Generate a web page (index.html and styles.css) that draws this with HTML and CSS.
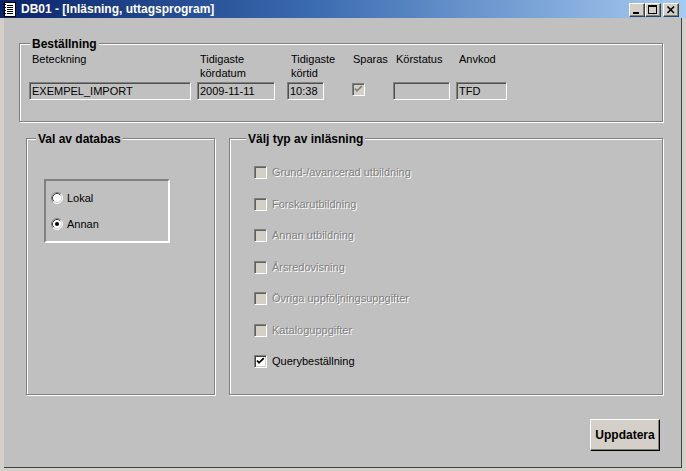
FILE: index.html
```html
<!DOCTYPE html>
<html lang="sv">
<head>
<meta charset="utf-8">
<title>DB01 - [Inläsning, uttagsprogram]</title>
<link rel="stylesheet" href="styles.css">
</head>
<body>
<div class="window">
  <div class="titlebar">
    <svg class="app-icon" width="13" height="15" viewBox="0 0 13 15">
      <rect x="1.5" y="0.5" width="11" height="14" fill="#fff" stroke="#000"/>
      <rect x="0" y="2" width="3" height="1" fill="#000"/>
      <rect x="0" y="5" width="3" height="1" fill="#000"/>
      <rect x="0" y="8" width="3" height="1" fill="#000"/>
      <rect x="0" y="11" width="3" height="1" fill="#000"/>
      <rect x="4" y="3" width="6" height="1" fill="#000"/>
      <rect x="4" y="5" width="6" height="1" fill="#000"/>
      <rect x="4" y="7" width="6" height="1" fill="#000"/>
      <rect x="4" y="9" width="6" height="1" fill="#000"/>
      <rect x="4" y="11" width="6" height="1" fill="#000"/>
    </svg>
    <span class="title">DB01 - [Inläsning, uttagsprogram]</span>
    <div class="caption-buttons">
      <span class="cap-btn">
        <svg width="14" height="12" viewBox="0 0 14 12"><rect x="3" y="8" width="6" height="2" fill="#000"/></svg>
      </span>
      <span class="cap-btn">
        <svg width="14" height="12" viewBox="0 0 14 12"><rect x="2" y="1" width="9" height="9" fill="#000"/><rect x="3" y="3" width="7" height="6" fill="#d4d0c8"/></svg>
      </span>
      <span class="cap-btn cap-btn-close">
        <svg width="14" height="12" viewBox="0 0 14 12"><path d="M3.5 2.5 L10 9 M10 2.5 L3.5 9" stroke="#000" stroke-width="1.6" fill="none"/></svg>
      </span>
    </div>
  </div>
  <div class="frame">
    <div class="client">
      <div class="group group-order">
        <span class="legend legend-order">Beställning</span>
        <div class="order-grid">
          <div class="col">
            <div class="lbl">Beteckning</div>
            <div class="field field-w162">EXEMPEL_IMPORT</div>
          </div>
          <div class="col">
            <div class="lbl">Tidigaste<br>kördatum</div>
            <div class="field field-w78">2009-11-11</div>
          </div>
          <div class="col">
            <div class="lbl lbl-wide">Tidigaste<br>körtid</div>
            <div class="field field-w37">10:38</div>
          </div>
          <div class="col">
            <div class="lbl lbl-narrow">Sparas</div>
            <div class="field-slot">
              <span class="chk chk-disabled">
                <svg width="11" height="11" viewBox="0 0 11 11"><path d="M2 4.5 L4 6.8 L8.8 2.2" stroke="#808080" stroke-width="1.7" fill="none"/></svg>
              </span>
            </div>
          </div>
          <div class="col">
            <div class="lbl">Körstatus</div>
            <div class="field field-w57"></div>
          </div>
          <div class="col">
            <div class="lbl">Anvkod</div>
            <div class="field field-w51">TFD</div>
          </div>
        </div>
      </div>

      <div class="row2">
        <div class="group group-db">
          <span class="legend legend-db">Val av databas</span>
          <div class="radio-box">
            <div class="radio-row">
              <svg class="radio" width="12" height="12" viewBox="0 0 12 12">
                <circle cx="6" cy="6" r="5" fill="#fff"/>
                <path d="M2.11 9.89 A5.5 5.5 0 0 1 9.89 2.11" stroke="#808080" fill="none"/>
                <path d="M9.89 2.11 A5.5 5.5 0 0 1 2.11 9.89" stroke="#fff" fill="none"/>
                <path d="M2.82 9.18 A4.5 4.5 0 0 1 9.18 2.82" stroke="#404040" fill="none"/>
                <path d="M9.18 2.82 A4.5 4.5 0 0 1 2.82 9.18" stroke="#d4d0c8" fill="none"/>
              </svg>
              <span>Lokal</span>
            </div>
            <div class="radio-row">
              <svg class="radio" width="12" height="12" viewBox="0 0 12 12">
                <circle cx="6" cy="6" r="5" fill="#fff"/>
                <path d="M2.11 9.89 A5.5 5.5 0 0 1 9.89 2.11" stroke="#808080" fill="none"/>
                <path d="M9.89 2.11 A5.5 5.5 0 0 1 2.11 9.89" stroke="#fff" fill="none"/>
                <path d="M2.82 9.18 A4.5 4.5 0 0 1 9.18 2.82" stroke="#404040" fill="none"/>
                <path d="M9.18 2.82 A4.5 4.5 0 0 1 2.82 9.18" stroke="#d4d0c8" fill="none"/>
                <circle cx="6" cy="6" r="2" fill="#000"/>
              </svg>
              <span>Annan</span>
            </div>
          </div>
        </div>

        <div class="group group-type">
          <span class="legend legend-type">Välj typ av inläsning</span>
          <div class="check-row"><span class="chk chk-disabled"></span><span class="disabled-text">Grund-/avancerad utbildning</span></div>
          <div class="check-row"><span class="chk chk-disabled"></span><span class="disabled-text">Forskarutbildning</span></div>
          <div class="check-row"><span class="chk chk-disabled"></span><span class="disabled-text">Annan utbildning</span></div>
          <div class="check-row"><span class="chk chk-disabled"></span><span class="disabled-text">Årsredovisning</span></div>
          <div class="check-row"><span class="chk chk-disabled"></span><span class="disabled-text">Övriga uppföljningsuppgifter</span></div>
          <div class="check-row"><span class="chk chk-disabled"></span><span class="disabled-text">Kataloguppgifter</span></div>
          <div class="check-row">
            <span class="chk">
              <svg width="11" height="11" viewBox="0 0 11 11"><path d="M2 4.5 L4 6.8 L8.8 2.2" stroke="#000" stroke-width="1.8" fill="none"/></svg>
            </span>
            <span>Querybeställning</span>
          </div>
        </div>
      </div>

      <div class="actions">
        <button class="btn" type="button">Uppdatera</button>
      </div>
    </div>
  </div>
</div>
</body>
</html>
```

FILE: styles.css
```css
body {
  margin: 0;
  font-family: "Liberation Sans", Arial, sans-serif;
  font-size: 11px;
  color: #000;
  background: #c0c0c0;
}

.window {
  width: 686px;
  height: 471px;
  display: flex;
  flex-direction: column;
  background: #d4d0c8;
  overflow: hidden;
}

.titlebar {
  height: 18px;
  flex: none;
  display: flex;
  align-items: center;
  background: linear-gradient(to right, #0a246a 0%, #3a6ab0 45%, #a6caf0 100%);
  color: #fff;
}

.app-icon {
  margin-left: 3px;
  flex: none;
}

.title {
  margin-left: 5px;
  font-weight: bold;
  font-size: 12px;
  line-height: 18px;
  white-space: nowrap;
}

.caption-buttons {
  margin-left: auto;
  padding-right: 7px;
  display: flex;
  align-self: flex-start;
  margin-top: 3px;
}

.cap-btn {
  width: 16px;
  height: 14px;
  box-sizing: border-box;
  background: #d4d0c8;
  border: 1px solid;
  border-color: #fff #404040 #404040 #fff;
  box-shadow: inset -1px -1px 0 #808080;
  display: flex;
}

.cap-btn-close {
  margin-left: 2px;
}

.frame {
  flex: 1;
  display: flex;
  padding: 0 4px 3px 4px;
  background: #d4d0c8;
}

.client {
  flex: 1;
  display: flex;
  flex-direction: column;
  align-items: flex-start;
  box-sizing: border-box;
  background: #c0c0c0;
  border-right: 1px solid #404040;
  border-bottom: 1px solid #404040;
  padding: 25px 0 0 15px;
}

.group {
  position: relative;
  box-sizing: border-box;
  border: 1px solid #808080;
  box-shadow: inset 1px 1px 0 #fff, 1px 1px 0 #fff;
}

.legend {
  position: absolute;
  top: -7px;
  padding: 0 2px;
  background: #c0c0c0;
  font-weight: bold;
  font-size: 12px;
  line-height: 14px;
  white-space: nowrap;
}

.legend-order { left: 10px; }
.legend-db { left: 9px; }
.legend-type { left: 16px; }

.group-order {
  width: 644px;
  height: 79px;
  padding: 8px 0 0 9px;
}

.order-grid {
  display: grid;
  grid-template-columns: 168px 90px 65px 41px 63px 51px;
}

.col {
  display: flex;
  flex-direction: column;
  align-items: flex-start;
}

.lbl {
  height: 28px;
  line-height: 14px;
  padding-left: 3px;
  margin-bottom: 2px;
  white-space: nowrap;
}

.lbl-wide { padding-left: 4px; }
.lbl-narrow { padding-left: 1px; }

.field {
  height: 18px;
  box-sizing: border-box;
  border: 1px solid;
  border-color: #808080 #fff #fff #808080;
  box-shadow: inset 1px 1px 0 #505050;
  background: #c0c0c0;
  line-height: 16px;
  padding-left: 2px;
  white-space: nowrap;
}

.field-w162 { width: 162px; }
.field-w78 { width: 78px; }
.field-w37 { width: 37px; }
.field-w57 { width: 57px; }
.field-w51 { width: 51px; }

.field-slot {
  height: 18px;
  padding-top: 1px;
  box-sizing: border-box;
}

.chk {
  width: 13px;
  height: 13px;
  flex: none;
  box-sizing: border-box;
  border: 1px solid;
  border-color: #808080 #fff #fff #808080;
  box-shadow: inset 1px 1px 0 #404040, inset -1px -1px 0 #d4d0c8;
  background: #fff;
  display: flex;
}

.chk-disabled {
  background: #d4d0c8;
  box-shadow: inset 1px 1px 0 #606060;
}

.row2 {
  display: flex;
  gap: 14px;
  margin: 16px 0 0 7px;
}

.group-db {
  width: 189px;
  height: 257px;
  padding: 40px 0 0 17px;
}

.radio-box {
  width: 126px;
  height: 64px;
  box-sizing: border-box;
  border: 2px solid;
  border-color: #808080 #fff #fff #808080;
  padding: 10px 0 0 5px;
  display: flex;
  flex-direction: column;
  gap: 12px;
}

.radio-row {
  display: flex;
  align-items: center;
  gap: 4px;
  height: 14px;
  line-height: 14px;
}

.radio {
  flex: none;
}

.group-type {
  width: 434px;
  height: 257px;
  padding: 27px 0 0 24px;
  display: flex;
  flex-direction: column;
  gap: 18.5px;
}

.check-row {
  display: flex;
  align-items: center;
  gap: 5px;
  height: 13px;
  line-height: 13px;
  white-space: nowrap;
}

.disabled-text {
  color: #808080;
  text-shadow: 1px 1px 0 #fff;
}

.actions {
  align-self: stretch;
  display: flex;
  justify-content: flex-end;
  margin-top: 24px;
  padding-right: 21px;
}

.btn {
  width: 70px;
  height: 32px;
  padding: 0;
  font-family: "Liberation Sans", Arial, sans-serif;
  font-weight: bold;
  font-size: 12px;
  color: #000;
  background: #d4d0c8;
  border: 1px solid;
  border-color: #fff #000 #000 #fff;
  box-shadow: inset -1px -1px 0 #808080;
}
```
